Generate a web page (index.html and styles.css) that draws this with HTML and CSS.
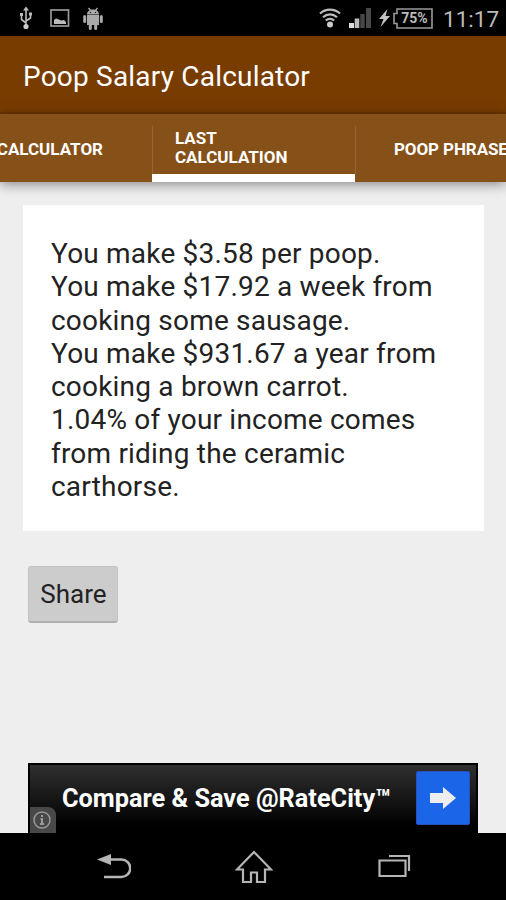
FILE: index.html
```
<!DOCTYPE html>
<html lang="en">
<head>
  <meta charset="UTF-8" />
  <meta name="viewport" content="width=device-width, initial-scale=1.0"/>
  <title>Poop Salary Calculator</title>
  <link rel="stylesheet" href="styles.css">
</head>

<body>
  <div class="status-bar">
    <svg class="usb" width="14" height="24" viewBox="0 0 14 24" fill="none" stroke="#bbb" stroke-width="1.6">
      <path d="M7 3v17M2.5 9v4.5L7 17M11.5 8v4L7 15"/>
      <path d="M7 0.5l3 4H4zM1 7h3v3H1zM10 6.500h3v3h-3z" fill="#bbb" stroke="none"/>
      <circle cx="7" cy="20.500" r="2.600" fill="#ccc" stroke="none"/>
    </svg>
    <svg class="picture" width="20" height="18" viewBox="0 0 20 18">
      <rect x="1" y="1" width="17.500" height="16" fill="none" stroke="#999" stroke-width="1.700"/>
      <path d="M4 15v-4l2-1.500 3 1 2 1 3-.5 2 2v2z" fill="#bbb"/>
    </svg>
    <svg class="droid" width="20" height="23" viewBox="0 0 20 23" fill="#aaa">
      <path d="M4 7.500C4 4.500 6.500 2.500 10 2.500s6 2 6 5zM4 8h12v10H4z"/>
      <path d="M5.500 1l2 2.500M14.500 1l-2 2.500" fill="none" stroke="#aaa" stroke-width="1.300"/>
      <path d="M1.700 9.500v5M18.300 9.500v5M7.300 17v4.500M12.700 17v4.500" fill="none" stroke="#aaa" stroke-width="3" stroke-linecap="round"/>
      <circle cx="7.500" cy="5.500" r=".7" fill="#222"/>
      <circle cx="12.500" cy="5.500" r=".7" fill="#222"/>
    </svg>
    <div class="status-right">
      <svg class="wifi" width="22" height="20" viewBox="0 0 22 20" fill="none" stroke="#bbb" stroke-width="2.200">
        <path d="M1 5.500C6.500.2 15.500.2 21 5.500M4 9.200c4-3.800 10-3.800 14 0M6.800 12.500c2.400-2.300 6-2.300 8.400 0"/>
        <circle cx="11" cy="16.500" r="3" fill="#ccc" stroke="none"/>
      </svg>
      <svg class="signal" width="22" height="20" viewBox="0 0 22 20">
        <path d="M0 15h5v5H0z" fill="#ddd"/>
        <path d="M5.700 10.500h4.600V20H5.700z" fill="#bbb"/>
        <path d="M11.300 6h4.400v14h-4.400zM17 0h5v20h-5z" fill="#484848"/>
      </svg>
      <svg class="bolt" width="11" height="18" viewBox="0 0 11 18">
        <path d="M8.500 0L0 10h4.500L1.500 18 11 7H6.500z" fill="#c4c4c4"/>
      </svg>
      <div class="battery">
        <svg width="40" height="21" viewBox="0 0 40 21">
          <path d="M4 1h35v19H4v-4.500H1v-10h3z" fill="none" stroke="#999" stroke-width="1.600"/>
        </svg>
        <span>75%</span>
      </div>
      <span class="clock">11:17</span>
    </div>
  </div>

  <header class="action-bar">
    <h1>Poop Salary Calculator</h1>
  </header>

  <nav class="tabs">
    <a class="tab first">CALCULATOR</a>
    <a class="tab active">LAST<br>CALCULATION</a>
    <a class="tab last">POOP PHRASE</a>
  </nav>

  <main class="content">
    <div class="card">
      You make $3.58 per poop.<br>
      You make $17.92 a week from<br>
      cooking some sausage.<br>
      You make $931.67 a year from<br>
      cooking a brown carrot.<br>
      1.04% of your income comes<br>
      from riding the ceramic<br>
      carthorse.
    </div>

    <button class="share">Share</button>

    <div class="ad">
      <span class="ad-info">
        <svg width="18" height="18" viewBox="0 0 18 18" fill="none" stroke="#999">
          <circle cx="9" cy="9" r="8" stroke-width="1.500"/>
          <path d="M9 4v2M7.500 8H9v5M7 13h4" stroke-width="2"/>
        </svg>
      </span>
      <span class="ad-text">Compare &amp; Save @RateCity™</span>
      <span class="ad-go">
        <svg width="26" height="24" viewBox="0 0 26 24">
          <path d="M0 7h13V1l13 11-13 11v-6H0z" fill="#eee"/>
        </svg>
      </span>
    </div>
  </main>

  <footer class="nav-bar">
    <svg class="back" width="34" height="26" viewBox="0 0 34 26">
      <path d="M12 5.500h12.500a8.700 8.700 0 0 1 0 17.500H7" fill="none" stroke="#b5b5b5" stroke-width="2.500"/>
      <path d="M0 5.500L14 0v11z" fill="#b5b5b5"/>
    </svg>
    <svg class="home" width="38" height="34" viewBox="0 0 38 34">
      <path d="M19 2L2 19.500h6V32h8v-9.500h6V32h8V19.500h6z" fill="none" stroke="#b5b5b5" stroke-width="2.200"/>
    </svg>
    <svg class="recent" width="33" height="24" viewBox="0 0 33 24" fill="none" stroke="#b5b5b5" stroke-width="2.200">
      <path d="M1.500 6.500h26v15.500h-26z"/>
      <path d="M11 2h20v15"/>
    </svg>
  </footer>
</body>
</html>
```
FILE: styles.css
```
* {
  box-sizing: border-box;
}

body {
  margin: 0;
  height: 900px;
  display: flex;
  flex-direction: column;
  overflow: hidden;
  font-family: Roboto, sans-serif;
  background: #eee;
  color: #222;
}

svg {
  display: block;
  flex: none;
}

.status-bar {
  height: 36px;
  flex: none;
  display: flex;
  align-items: center;
  padding: 0 8px 0 19px;
  background: #000;
}

.picture {
  margin-left: 17px;
}

.droid {
  margin-left: 13px;
}

.status-right {
  display: flex;
  align-items: center;
  margin-left: auto;
}

.signal {
  margin-left: 8px;
}

.bolt {
  margin-left: 8px;
}

.battery {
  position: relative;
  margin-left: 3px;
}

.battery span {
  position: absolute;
  top: 0;
  left: 4px;
  width: 35px;
  line-height: 21px;
  text-align: center;
  font-size: 14px;
  font-weight: bold;
  color: #bbb;
}

.clock {
  width: 55px;
  padding-top: 1px;
  margin-left: 10px;
  font-size: 22.5px;
  color: #bbb;
  white-space: nowrap;
}

.action-bar {
  height: 78px;
  flex: none;
  display: flex;
  align-items: center;
  padding: 0 23px 0;
  background: #783c00;
  border-bottom: 2px solid #6e3500;
}

h1 {
  margin: 0;
  padding-top: 5px;
  font-size: 28px;
  font-weight: normal;
  letter-spacing: 0.2px;
  color: #fff;
  white-space: nowrap;
}

.tabs {
  position: relative;
  height: 68px;
  flex: none;
  display: flex;
  background: linear-gradient(#9a6238, #9a6238) 152px 12px / 1px 48px no-repeat,
    linear-gradient(#9a6238, #9a6238) 355px 12px / 1px 48px no-repeat,
    #865019;
  box-shadow: 0 2px 12px rgba(0, 0, 0, 0.45);
}

.tab {
  flex: none;
  display: flex;
  align-items: center;
  padding-top: 2px;
  font-size: 17px;
  line-height: 19px;
  font-weight: bold;
  color: #fff;
  white-space: nowrap;
}

.first {
  width: 152px;
  padding-right: 49px;
  justify-content: flex-end;
}

.active {
  width: 203px;
  padding: 8px 0 0 23px;
  border-bottom: 8px solid #fff;
}

.last {
  padding-left: 39px;
  letter-spacing: -0.1px;
}

.content {
  flex: 1;
  display: flex;
  flex-direction: column;
  align-items: flex-start;
  padding: 23px 22px 0 23px;
}

.card {
  width: 461px;
  height: 326px;
  padding: 32px 28px 0;
  background: #fff;
  font-size: 28px;
  line-height: 33.3px;
  letter-spacing: 0.2px;
  white-space: nowrap;
}

.share {
  width: 90px;
  height: 57px;
  margin: 35px 0 0 5px;
  padding: 0 0 0 1px;
  border: 1px solid #c3c3c3;
  border-bottom: 2px solid #b0b0b0;
  border-radius: 3px;
  background: #ccc;
  font-family: inherit;
  font-size: 26px;
  color: #222;
}

.ad {
  width: 450px;
  height: 70px;
  margin: auto 0 0 5px;
  display: flex;
  align-items: center;
  border: 2px solid #000;
  border-bottom: 0;
  background: linear-gradient(#303030, #000 90%);
}

.ad-info {
  width: 26px;
  height: 26px;
  flex: none;
  align-self: flex-end;
  padding: 4px 3px;
  border-radius: 0 8px 0 0;
  background: #484848;
}

.ad-text {
  padding: 0 0 2px 6px;
  font-size: 25.3px;
  font-weight: bold;
  color: #fff;
  white-space: nowrap;
}

.ad-go {
  width: 54px;
  height: 54px;
  flex: none;
  display: flex;
  align-items: center;
  justify-content: center;
  margin: -2px 6px 0 auto;
  border: 1px solid #2a50c0;
  border-radius: 2px;
  background: #1b66e8;
}

.nav-bar {
  height: 67px;
  flex: none;
  display: flex;
  align-items: center;
  padding: 0 0 1px 97px;
  background: #000;
}

.back {
  margin-top: 2px;
}

.home {
  margin-left: 104px;
  margin-top: 2px;
}

.recent {
  margin-left: 105px;
}
```
